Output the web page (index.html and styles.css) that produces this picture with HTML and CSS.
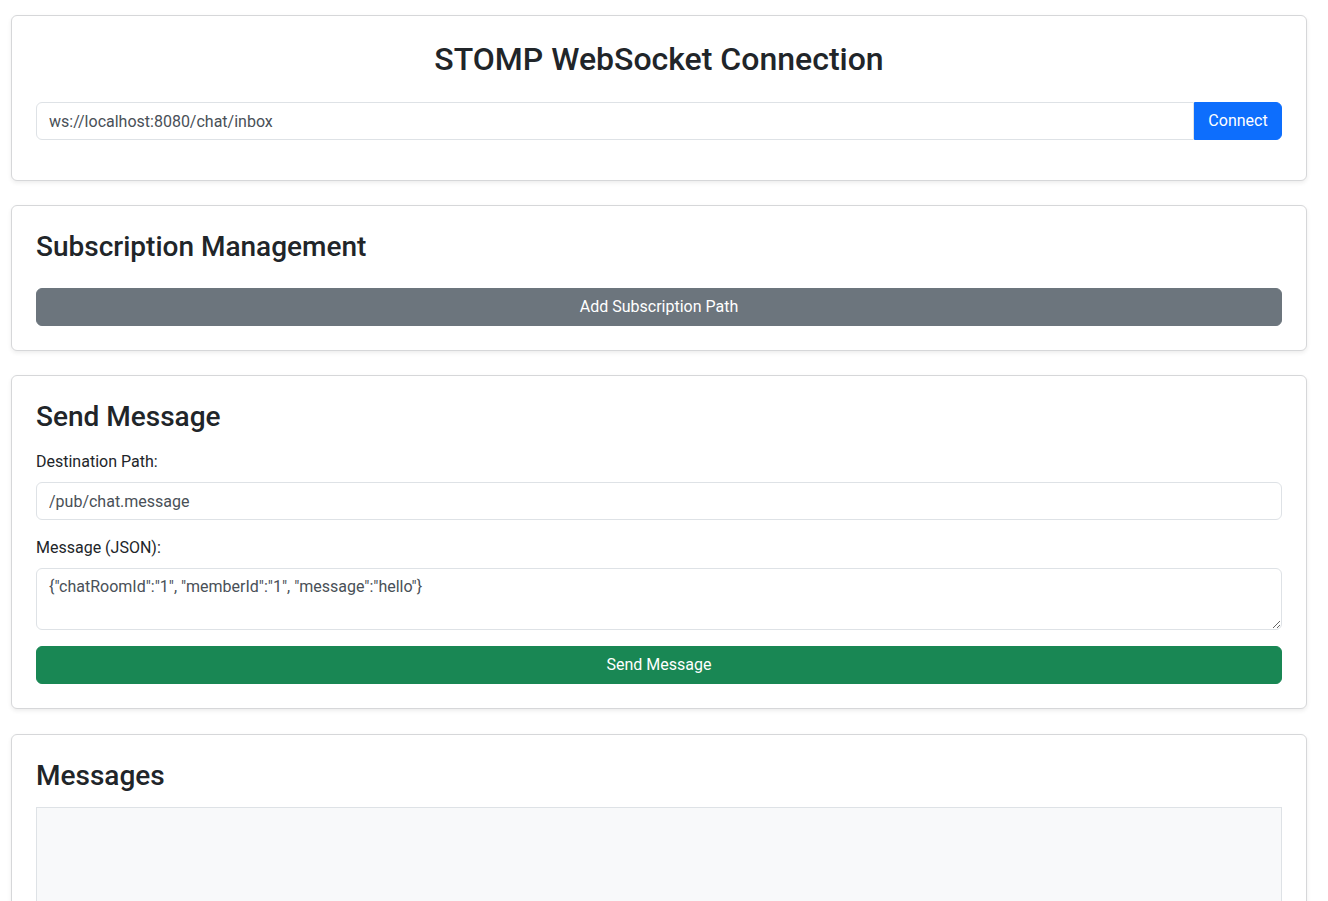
FILE: index.html
```html
<!DOCTYPE html>
<html lang="en">
<head>
<meta charset="utf-8">
<title>STOMP WebSocket</title>
<link rel="stylesheet" href="styles.css">
</head>
<body>
<main class="page">
  <section class="card">
    <h2 class="title">STOMP WebSocket Connection</h2>
    <div class="input-group">
      <input class="form-control" type="text" value="ws://localhost:8080/chat/inbox">
      <button class="btn btn-primary btn-connect">Connect</button>
    </div>
  </section>

  <section class="card">
    <h3 class="heading heading-sub">Subscription Management</h3>
    <button class="btn btn-secondary btn-block">Add Subscription Path</button>
  </section>

  <section class="card">
    <h3 class="heading">Send Message</h3>
    <div class="field">
      <label class="label">Destination Path:</label>
      <input class="form-control" type="text" value="/pub/chat.message">
    </div>
    <div class="field">
      <label class="label">Message (JSON):</label>
      <textarea class="form-control textarea" rows="2">{"chatRoomId":"1", "memberId":"1", "message":"hello"}</textarea>
    </div>
    <button class="btn btn-success btn-block">Send Message</button>
  </section>

  <section class="card card-last">
    <h3 class="heading heading-msg">Messages</h3>
    <div class="messages"></div>
  </section>
</main>
</body>
</html>
```

FILE: styles.css
```css
* { box-sizing: border-box; }

html, body {
  margin: 0;
  padding: 0;
  background: #fff;
  font-family: Roboto, "Liberation Sans", Arial, sans-serif;
  font-size: 16px;
  line-height: 1.5;
  color: #212529;
}

.page {
  width: 1296px;
  margin-left: 11px;
  padding-top: 15px;
  display: flex;
  flex-direction: column;
  gap: 24px;
}

.card {
  border: 1px solid #d6d7d9;
  border-radius: 6px;
  box-shadow: 0 2px 4px rgba(0,0,0,0.075);
  padding: 24px;
  background: #fff;
}

.card-last { margin-top: 1px; }

.title {
  margin: 0 0 24px;
  font-size: 32px;
  font-weight: 500;
  line-height: 38px;
  text-align: center;
}

.heading {
  margin: 0 0 16px;
  font-size: 28px;
  font-weight: 500;
  line-height: 34px;
}
.heading-sub { margin-bottom: 24px; }
.heading-msg { margin-bottom: 14px; }

.input-group {
  display: flex;
  margin-bottom: 16px;
}

.form-control {
  display: block;
  width: 100%;
  height: 38px;
  padding: 6px 12px;
  font: inherit;
  font-size: 16px;
  line-height: 24px;
  color: #495057;
  background: #fff;
  border: 1px solid #dee2e6;
  border-radius: 6px;
  outline: none;
}

.input-group .form-control {
  flex: 1;
  border-top-right-radius: 0;
  border-bottom-right-radius: 0;
}

.textarea {
  height: 62px;
  resize: vertical;
}

.field { margin-bottom: 16px; }

.label {
  display: block;
  margin-bottom: 8px;
  line-height: 24px;
}

.btn {
  display: block;
  height: 38px;
  padding: 6px 12px;
  font: inherit;
  font-size: 16px;
  line-height: 24px;
  color: #fff;
  border: 1px solid transparent;
  border-radius: 6px;
  text-align: center;
  cursor: pointer;
}

.btn-block { width: 100%; }

.btn-primary { background: #0d6efd; border-color: #0d6efd; }
.btn-secondary { background: #6c757d; border-color: #6c757d; }
.btn-success { background: #198754; border-color: #198754; }

.btn-connect {
  width: 88px;
  border-top-left-radius: 0;
  border-bottom-left-radius: 0;
}

.messages {
  height: 300px;
  background: #f8f9fa;
  border: 1px solid #dee2e6;
}
```
